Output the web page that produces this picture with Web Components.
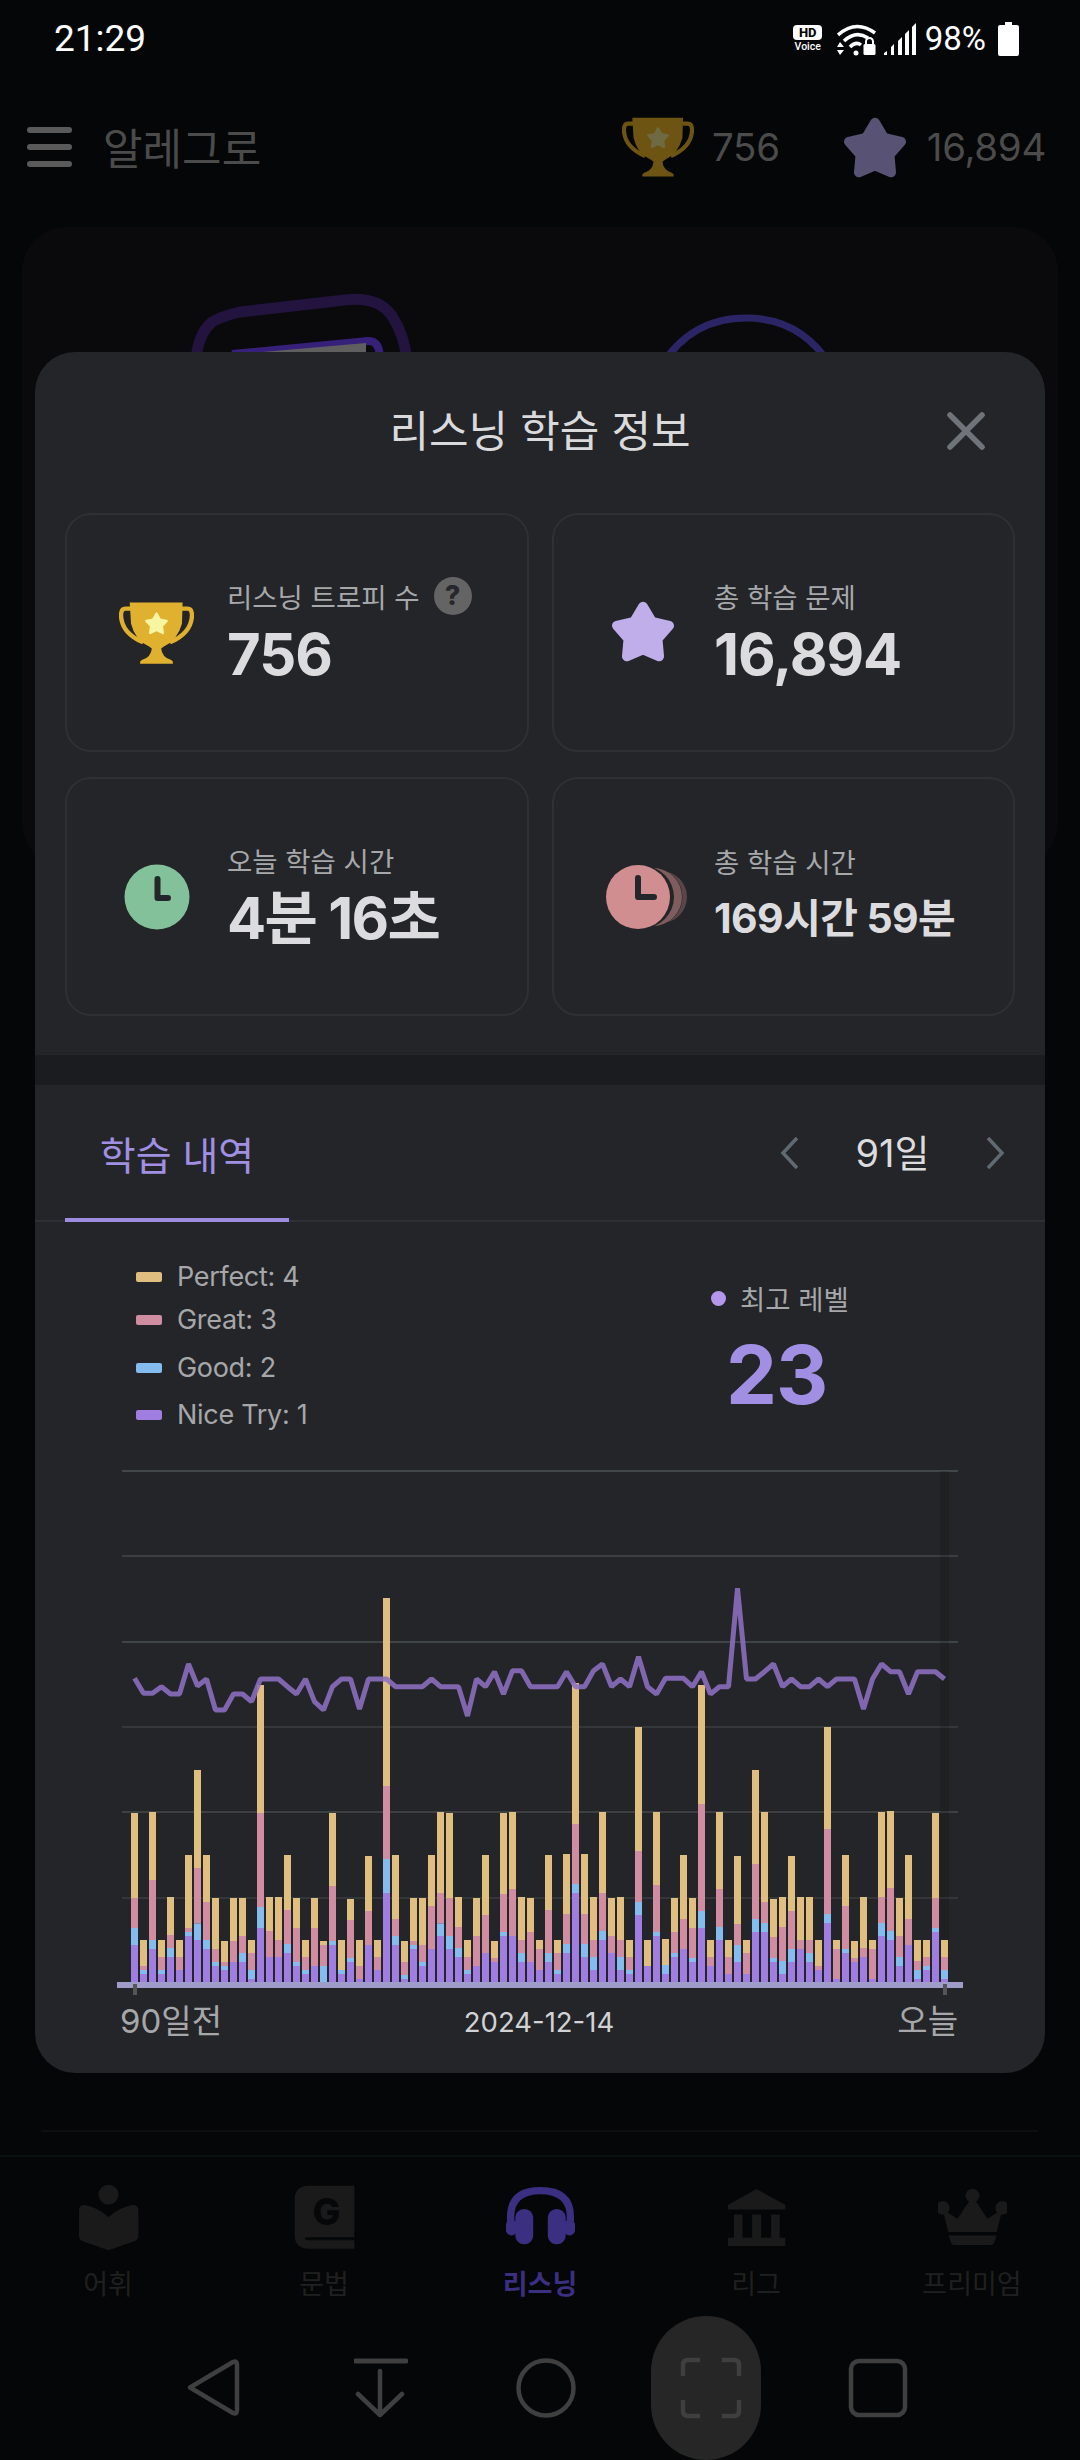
<!DOCTYPE html>
<html lang="ko"><head><meta charset="utf-8"><title>리스닝 학습 정보</title>
<style>
html,body{margin:0;padding:0;background:#050607}
body{font-family:Inter,"Noto Sans CJK KR",sans-serif}
</style></head>
<body>
<app-root>
  <status-bar></status-bar>
  <app-header></app-header>
  <bg-area></bg-area>
  <tab-bar></tab-bar>
  <nav-bar></nav-bar>
  <info-modal>
    <stat-card label="리스닝 트로피 수" value="756" help>
      <svg slot="icon" width="75" height="62" viewBox="178 308 224 184" style="margin-left:-2px"><g fill="none" stroke="#e0b02f" stroke-width="13"><path d="M214 327H197Q184 327 184 348Q186 400 250 428"/><path d="M366 327H383Q396 327 396 348Q394 400 330 428"/></g><path fill="#e0b02f" d="M210 309H368L366 372Q352 422 312 440L304 446Q306 472 334 481Q341 485 339 492H241Q239 485 246 481Q274 472 276 446L268 440Q226 422 214 372Z"/><polygon data-star="290,374,32,17" points="" fill="#f7f5a2" stroke="#f7f5a2" stroke-width="7" stroke-linejoin="round"/></svg>
    </stat-card>
    <stat-card label="총 학습 문제" value="16,894">
      <svg slot="icon" width="68" height="66" viewBox="0 0 64 62" style="margin:-4px 0 0 -3px"><polygon data-star="32,34,26,14.5" points="" fill="#bfaeea" stroke="#bfaeea" stroke-width="9" stroke-linejoin="round"/></svg>
    </stat-card>
    <stat-card label="오늘 학습 시간" value="4분 16초" tight>
      <svg slot="icon" width="66" height="66" viewBox="0 0 66 66"><circle cx="33" cy="33" r="32.5" fill="#82c199"/><path d="M33.500 15V34H44" fill="none" stroke="#23262a" stroke-width="6" stroke-linecap="round" stroke-linejoin="round"/></svg>
    </stat-card>
    <stat-card label="총 학습 시간" value="169시간 59분" small>
      <svg slot="icon" width="82" height="66" viewBox="0 0 82 66" style="margin-left:4px"><circle cx="56" cy="33" r="26" fill="#5a4646"/><circle cx="49" cy="33" r="28.500" fill="#232528"/><circle cx="48" cy="33" r="29" fill="#7f5d5e"/><circle cx="38" cy="33" r="31" fill="#232528"/><circle cx="33" cy="33" r="32" fill="#d18e90"/><path d="M33 14V33H49" fill="none" stroke="#23262a" stroke-width="6" stroke-linecap="round" stroke-linejoin="round"/></svg>
    </stat-card>
  </info-modal>
</app-root>
<script>
const def=(name,html,extra)=>{customElements.define(name,class extends HTMLElement{
  constructor(){super();this.attachShadow({mode:'open'}).innerHTML=typeof html==='function'?html(this):html;}
  connectedCallback(){
    if(extra&&!this._d){this._d=1;extra(this);}
  }
});};
const starPts=(cx,cy,R,r)=>{let p=[];for(let i=0;i<10;i++){const a=-Math.PI/2+i*Math.PI/5,q=i%2?r:R;p.push((cx+q*Math.cos(a)).toFixed(1)+','+(cy+q*Math.sin(a)).toFixed(1));}return p.join(' ');};
const fillStars=root=>root.querySelectorAll('[data-star]').forEach(e=>{const[a,b,c,d]=e.dataset.star.split(',').map(Number);e.setAttribute('points',starPts(a,b,c,d));});

def('app-root',`<style>:host{display:flex;flex-direction:column;position:relative;width:1080px;height:2460px;overflow:hidden;background:#050607;font-family:Inter,"Noto Sans CJK KR",sans-serif}
</style><slot></slot>`);

def('status-bar',`<style>:host{display:flex;align-items:center;height:76px;padding:1px 61px 0 54px;box-sizing:border-box;color:#fff;font-family:Roboto,sans-serif;flex:none}
.t{font-size:37px;line-height:75px;flex:1}
.hd{display:flex;flex-direction:column;align-items:center;width:30px;margin-right:14px}
.hd b{display:block;background:#fff;color:#050505;border-radius:4px;font:800 13px/15px Roboto,sans-serif;width:29px;text-align:center}
.hd i{font:normal 500 10.500px/12px Roboto,sans-serif;margin-top:1px}
.p{font-size:33px;margin:0 12px 0 8px;line-height:75px}
svg{display:block}
</style><span class="t">21:29</span><span class="hd"><b>HD</b><i>Voice</i></span>
<svg width="40" height="34" viewBox="0 0 40 34"><g fill="none" stroke="#fff" stroke-width="3.500"><path d="M1 13Q19 -3 38 11"/><path d="M7 19Q19 8 31 16"/><path d="M13 25Q19 19 24 23"/></g><circle cx="19" cy="31" r="2.500" fill="#fff"/><path fill="#fff" d="M3 20l4 5H0zM3 33l4-5H0z"/><path fill="none" stroke="#fff" stroke-width="2" d="M29 22v-2.500a3.500 3.500 0 0 1 7 0V22"/><rect x="26.500" y="22" width="12" height="11" rx="1.500" fill="#fff"/></svg>
<svg width="34" height="32" viewBox="0 0 34 32" style="margin-left:6px"><path fill="#fff" d="M1 32v-2l3-2v4zM8 32v-8l3-3v11zM15 32V18l4-4v18zM22 32V11l4-4v25zM29 32V4l4-4v32z"/></svg>
<span class="p">98%</span>
<svg width="21" height="34" viewBox="0 0 21 34"><path fill="#fff" d="M7 0h7v3h5a2 2 0 0 1 2 2v27a2 2 0 0 1-2 2H2a2 2 0 0 1-2-2V5a2 2 0 0 1 2-2h5z"/></svg>`);

def('app-header',`<style>:host{display:flex;align-items:center;height:142px;padding:0 34px 0 27px;flex:none;color:#4b4b4b}
.m{display:flex;flex-direction:column;gap:11px;width:45px}.m i{display:block;height:6px;border-radius:3px;background:#5a5a5a}
.n{font-size:43px;line-height:60px;margin:-2px 0 0 31px;flex:1;font-family:"Noto Sans CJK KR",sans-serif}
.v{font-size:38.500px;line-height:60px;font-family:Inter,sans-serif;letter-spacing:-.3px}
svg{display:block}
</style><div class="m"><i></i><i></i><i></i></div><span class="n">알레그로</span>
<svg width="72" height="60" viewBox="178 308 224 184"><g fill="none" stroke="#6d5412" stroke-width="13"><path d="M214 327H197Q184 327 184 348Q186 400 250 428"/><path d="M366 327H383Q396 327 396 348Q394 400 330 428"/></g><path fill="#6d5412" d="M210 309H368L366 372Q352 422 312 440L304 446Q306 472 334 481Q341 485 339 492H241Q239 485 246 481Q274 472 276 446L268 440Q226 422 214 372Z"/><polygon data-star="290,374,32,17" points="" fill="#6e6a44" stroke="#6e6a44" stroke-width="7" stroke-linejoin="round"/></svg>
<span class="v" style="margin:0 61px 0 18px">756</span>
<svg width="68" height="66" viewBox="0 0 64 62"><polygon data-star="32,34,26,14.500" points="" fill="#585274" stroke="#585274" stroke-width="9" stroke-linejoin="round"/></svg>
<span class="v" style="margin-left:18px">16,894</span>`,el=>fillStars(el.shadowRoot));

def('bg-area',`<style>:host{display:flex;flex-direction:column;flex:1;min-height:0;border-bottom:2px solid #0a0f10;box-sizing:border-box}
.c{height:640px;flex:none;margin:9px 22px 0;border-radius:44px;background:#0a0a0c;overflow:hidden}
.sp{flex:1}
.ln{height:2px;background:#0a0f10;margin:0 42px 23px 41px}
svg{display:block}
</style><div class="c"><svg width="1036" height="140" viewBox="22 227 1036 140"><g fill="none"><path d="M196 360Q198 334 212 322Q222 316 240 312L345 300Q378 296 392 316Q404 334 407 360" stroke="#22133f" stroke-width="11"/><path d="M232 354L368 341Q380 340 380 360" stroke="#37207a" stroke-width="8"/><path d="M240 354L366 343V354Z" fill="#5f5f60"/><path d="M660 368Q690 318 746 318Q802 318 832 368" stroke="#2b2565" stroke-width="7"/></g></svg></div><div class="sp"></div><div class="ln"></div>`);

const nav=[['어휘',`<circle cx="324" cy="195" r="30"/><path d="M235 243Q235 225 252 226Q294 234 324 263Q354 234 396 226Q414 225 414 243V318Q414 331 400 336L324 363L248 336Q235 331 235 318Z"/>`,'220 160 208 208'],
['문법',`<path d="M925 168H1062V358H925Q882 358 882 315V210Q882 168 925 168Z"/><path d="M918 328H1062" stroke="#060708" stroke-width="9" stroke-linecap="round" fill="none"/><text x="978" y="287" text-anchor="middle" font-family="Inter,sans-serif" font-weight="800" font-size="112" fill="#060708">G</text>`,'868 160 208 208'],
['리스닝',`<path d="M-30 285V262Q-30 183 60 183Q150 183 150 262V285" fill="none" stroke="#3a2f80" stroke-width="22"/><rect x="82" y="238" width="54" height="107" rx="26"/><rect x="-16" y="238" width="54" height="107" rx="26"/><rect x="130" y="270" width="35" height="48" rx="20"/><rect x="-45" y="270" width="35" height="48" rx="20"/>`,'-44 160 208 208'],
['리그',`<path d="M708 178L795 226V240H622V226Z"/><rect x="640" y="255" width="26" height="72"/><rect x="695" y="255" width="27" height="72"/><rect x="752" y="255" width="26" height="72"/><rect x="622" y="325" width="173" height="25"/>`,'604 160 208 208'],
['프리미엄',`<circle cx="1265" cy="235" r="21"/><circle cx="1355" cy="198" r="21"/><circle cx="1445" cy="235" r="21"/><path d="M1355 200L1400 268L1445 240L1428 308H1282L1265 240L1310 268Z"/><path d="M1283 318H1428L1420 340Q1418 347 1410 347H1300Q1292 347 1290 340Z"/>`,'1251 160 208 208']];
def('tab-bar',`<style>:host{display:grid;grid-template-columns:repeat(5,216px);height:159px;flex:none;color:#222}
.t{display:flex;flex-direction:column;align-items:center;padding-top:26px}
svg{display:block;width:69px;height:69px;fill:#1a1a1a}
span{font:400 27px/34px "Noto Sans CJK KR",sans-serif;margin-top:14px;color:#202020}
.a svg{fill:#3a2f80}.a span{color:#3a2f80;font-weight:700}
</style>`+nav.map((n,i)=>`<div class="t${i==2?' a':''}"><svg viewBox="${n[2]}">${n[1]}</svg><span>${n[0]}</span></div>`).join(''));

def('nav-bar',`<style>:host{display:flex;align-items:center;height:144px;padding-left:185px;flex:none}
svg{display:block;flex:none;fill:none;stroke:#3f3f3f;stroke-width:4.500;stroke-linejoin:round;stroke-linecap:round}
.p{width:110px;height:144px;border-radius:55px;background:#262626;display:flex;align-items:center;justify-content:center;margin-left:75px;flex:none}
</style><svg width="56" height="60" viewBox="0 0 56 60"><path d="M5 29.500L48 4Q52 2 52 7V52Q52 57 48 55Z"/></svg>
<svg width="54" height="60" viewBox="0 0 54 60" style="margin-left:113px"><path d="M1 3H52" stroke-width="5"/><path d="M26 13V57M4 36L26 57L48 36"/></svg>
<svg width="60" height="60" viewBox="0 0 60 60" style="margin-left:108px"><circle cx="30" cy="30" r="27.500"/></svg>
<div class="p"><svg width="62" height="62" viewBox="0 0 62 62" style="stroke:#3f3f3f;margin-left:10px"><path d="M3 19V8Q3 3 8 3H20M42 3H54Q59 3 59 8V19M59 43V54Q59 59 54 59H42M20 59H8Q3 59 3 54V43" stroke-linecap="butt"/></svg></div>
<svg width="60" height="60" viewBox="0 0 60 60" style="margin-left:87px"><rect x="3" y="3" width="54" height="54" rx="8"/></svg>`);

def('stat-card',el=>{
  const h=el.hasAttribute('help');const sm=el.hasAttribute('small');const tg=el.hasAttribute('tight');
  return `<style>:host{display:flex;align-items:center;box-sizing:border-box;height:239px;border:2px solid #2d3034;border-radius:26px;min-width:0}
.i{width:160px;padding-left:20px;box-sizing:border-box;display:flex;justify-content:center;align-items:center;flex:none}
.b{padding-bottom:3px}
.l{font:400 27.500px/40px "Noto Sans CJK KR",sans-serif;color:#a7a8aa;display:flex;align-items:center;white-space:nowrap}
.q{display:inline-flex;align-items:center;justify-content:center;width:38px;height:38px;border-radius:50%;background:#646464;color:#26282b;font:800 27px/38px Inter,sans-serif;margin-left:14px}
.v{font:700 ${sm?41:58}px/64px Inter,"Noto Sans CJK KR",sans-serif;color:#dcdcde;margin-top:${sm?5:6}px;white-space:nowrap;letter-spacing:${sm?-.6:tg?-1.7:-1}px}
::slotted(svg){display:block}
</style><div class="i"><slot name="icon"></slot></div><div class="b"><div class="l"><span>${el.getAttribute('label')}</span>${h?'<span class="q">?</span>':''}</div><div class="v">${el.getAttribute('value')}</div></div>`;
});

fillStars(document);

def('legend-item',el=>`<style>:host{display:flex;align-items:center;height:40px;color:#a6a7a9;font:400 27px/40px Inter,sans-serif;letter-spacing:-.3px}
i{display:block;width:26px;height:10px;border-radius:2px;margin-right:15px;background:${el.getAttribute('color')}}</style><i></i><slot></slot>`);

const B=[[1155,1104,1014,759],[1242,1230,1218,1140],[1167,1140,960,756],[1242,1230,1191,1140],[1191,1164,1125,1011],[1230,1230,1191,1140],[1128,1116,1104,885],[1140,1090,924,630],[1167,1140,1026,885],[1218,1206,1167,1014],[1230,1218,1206,1143],[1206,1206,1143,1014],[1206,1179,1128,1014],[1257,1230,1179,1140],[1104,1041,759,375],[1191,1191,1113,1011],[1191,1191,1140,1011],[1179,1152,1050,885],[1218,1206,1104,1014],[1242,1230,1191,1140],[1218,1218,1104,1014],[1268,1218,1155,1143],[1155,1143,978,759],[1242,1230,1230,1140],[1206,1194,1080,1017],[1257,1257,1218,1140],[1155,1155,1053,888],[1230,1230,1191,1140],[999,897,678,114],[1155,1128,1077,885],[1257,1245,1206,1143],[1167,1155,1143,1014],[1218,1206,1155,1014],[1167,1167,1038,885],[1128,1090,999,756],[1167,1128,1014,759],[1191,1164,1101,1011],[1242,1230,1191,1140],[1218,1218,1128,1014],[1179,1179,1065,885],[1206,1206,1194,1143],[1128,1116,1002,759],[1128,1128,987,756],[1206,1179,1140,1011],[1206,1206,1116,1014],[1230,1230,1167,1140],
[1206,1179,1050,885],[1242,1230,1179,1140],[1179,1152,1062,882],[999,972,792,369],[1191,1152,1062,882],[1230,1191,1140,1011],[1140,1113,999,756],[1179,1179,1128,1014],[1230,1191,1140,1011],[1242,1230,1191,1140],[1065,1026,873,501],[1218,1218,1218,1140],[1128,1116,975,756],[1242,1215,1215,1137],[1191,1179,1116,1014],[1167,1167,1077,885],[1206,1194,1104,1014],[1104,1053,732,375],[1218,1218,1191,1140],[1140,1101,987,756],[1242,1242,1191,1140],[1206,1155,1092,888],[1242,1242,1179,1140],[1116,1077,912,630],[1116,1089,1026,756],[1206,1194,1131,1017],[1242,1203,1101,1011],[1206,1167,1053,888],[1167,1167,1140,1011],[1206,1179,1140,1011],[1230,1230,1218,1140],[1089,1062,807,501],[1257,1257,1167,1140],[1179,1167,1038,885],[1206,1206,1194,1143],[1191,1191,1164,1011],[1257,1257,1167,1140],[1128,1089,1011,756],[1140,1113,984,753],[1218,1191,1128,1014],[1155,1155,1077,885],[1257,1230,1203,1140],[1230,1218,1191,1140],[1116,1104,1014,759],[1257,1230,1191,1140]];
const L=[355,400,400,380,402,402,312,378,357,450,450,402,402,425,357,357,357,380,402,357,425,450,380,357,357,447,357,357,357,380,380,380,380,357,380,380,380,468,357,380,335,402,332,332,380,380,380,380,335,380,380,332,312,380,357,380,290,380,402,355,355,355,380,335,402,380,380,85,357,357,335,312,380,357,380,380,357,380,357,357,357,447,357,312,335,335,402,335,335,335,357];
const yr=z=>1560+z/3;
function chartSvg(){
  const base=yr(1268);
  const C=['#a07de0','#85bcf0','#d08ca1','#dfbe80'];let s='';
  [[1471,'#42474a'],[1556,'#3a3e41'],[1642,'#3f4447'],[1727,'#34383b'],[1812,'#3c4043'],[1898,'#34373a']].forEach(g=>s+=`<rect x="122" y="${g[0]-1}" width="836" height="2" fill="${g[1]}"/>`);
  s+=`<rect x="940" y="1471" width="9" height="512" fill="#000" opacity=".13"/>`;
  B.forEach((b,i)=>{const x=131+9*i;let prev=base;b.forEach((z,k)=>{const y=yr(z);if(prev-y>.2)s+=`<rect x="${x}" y="${y.toFixed(1)}" width="7" height="${(prev-y).toFixed(1)}" fill="${C[k]}"/>`;prev=y;});});
  s+=`<rect x="117" y="1982" width="846" height="6" fill="#a09cc9"/><rect x="133" y="1984" width="4" height="11" fill="#555"/><rect x="943" y="1984" width="4" height="11" fill="#555"/>`;
  s+=`<polyline fill="none" stroke="#8c70c0" stroke-opacity=".88" stroke-width="5" stroke-linejoin="bevel" points="${L.map((z,i)=>(134.5+9*i)+','+yr(z).toFixed(1)).join(' ')}"/>`;
  return s;
}
def('history-chart',`<style>:host{display:block;flex:none}svg{display:block}
.x{display:grid;grid-template-columns:1fr auto 1fr;align-items:center;padding:0 87px 0 85px;height:44px;color:#a6a7a9;font:400 33px/44px Inter,"Noto Sans CJK KR",sans-serif}
.d{font-size:27.500px;color:#d2d2d4;margin-top:2px}.r{text-align:right}
</style><svg width="1010" height="548" viewBox="35 1450 1010 548">${chartSvg()}</svg><div class="x"><span>90일전</span><span class="d">2024-12-14</span><span class="r">오늘</span></div>`);

def('info-modal',`<style>:host{display:flex;flex-direction:column;position:absolute;left:35px;top:352px;width:1010px;height:1721px;background:#232528;border-radius:40px;overflow:hidden;color:#dcdcde;font-family:Inter,"Noto Sans CJK KR",sans-serif}
.h{height:161px;padding-bottom:10px;box-sizing:border-box;position:relative;display:flex;align-items:center;justify-content:center;font:400 43px/60px "Noto Sans CJK KR",sans-serif;color:#dadadc;flex:none}
.x{position:absolute;left:911px;top:59px;display:block}
.g{display:grid;grid-template-columns:464px 463px;column-gap:23px;row-gap:25px;padding:0 30px;flex:none}
.sep{height:30px;background:#1a1c1f;margin-top:39px;flex:none}
.tabs{display:flex;align-items:center;height:137px;box-sizing:border-box;border-bottom:2px solid #2d3034;position:relative;flex:none}
.tab{position:absolute;left:30px;bottom:-2px;width:224px;height:137px;box-sizing:border-box;border-bottom:4px solid #9d8ce0;color:#a08fe3;font:400 39px/137px "Noto Sans CJK KR",sans-serif;text-align:center}
.per{position:absolute;left:745px;top:0;width:225px;height:135px;display:flex;align-items:center;justify-content:space-between;font:400 38px/1 Inter,"Noto Sans CJK KR",sans-serif;color:#dcdcde;box-sizing:border-box}
.per svg{display:block;fill:none;stroke:#5f6a72;stroke-width:3.500;stroke-linejoin:miter}
.st{display:flex;height:228px;flex:none}
.lg{display:flex;flex-direction:column;padding:35px 0 0 101px;width:634px;box-sizing:border-box}
.mx{display:flex;flex-direction:column;padding-left:40px;padding-top:56px}
.ml{display:flex;align-items:center;font:400 27.500px/40px "Noto Sans CJK KR",sans-serif;color:#a6a7a9}
.ml i{width:15px;height:15px;border-radius:50%;background:#b397ee;margin:0 14px 0 2px}
.mv{font:700 81px/90px Inter,sans-serif;color:#a08fe3;padding-left:17px;margin-top:12px;letter-spacing:-1px}
</style>
<div class="h">리스닝 학습 정보<svg class="x" width="40" height="40" viewBox="0 0 40 40"><path d="M4 4L36 36M36 4L4 36" stroke="#6e7479" stroke-width="5.500" stroke-linecap="round"/></svg></div>
<div class="g"><slot></slot></div>
<div class="sep"></div>
<div class="tabs"><div class="tab">학습 내역</div><div class="per"><svg width="20" height="34" viewBox="0 0 20 34"><path d="M17 2L3 17L17 32"/></svg><span>91일</span><svg width="20" height="34" viewBox="0 0 20 34"><path d="M3 2L17 17L3 32"/></svg></div></div>
<div class="st"><div class="lg"><legend-item color="#dfbe80">Perfect: 4</legend-item><legend-item color="#d08ca1" style="margin-top:3px">Great: 3</legend-item><legend-item color="#85bcf0" style="margin-top:8px">Good: 2</legend-item><legend-item color="#a07de0" style="margin-top:7px">Nice Try: 1</legend-item></div>
<div class="mx"><div class="ml"><i></i>최고 레벨</div><div class="mv">23</div></div></div>
<history-chart></history-chart>`);
</script>
</body></html>
